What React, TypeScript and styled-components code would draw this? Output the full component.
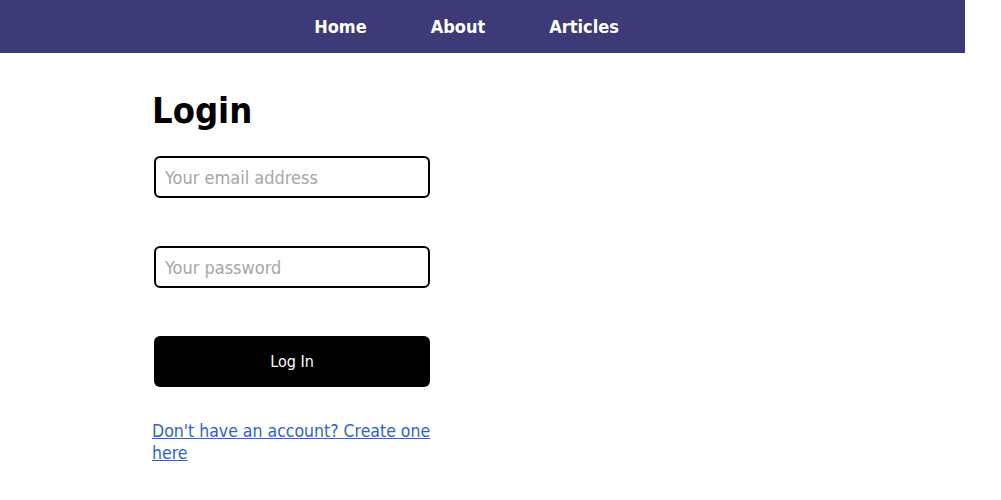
import React from 'react';
import styled, { createGlobalStyle } from 'styled-components';

const GlobalStyle = createGlobalStyle`
  body {
    margin: 0;
    background: #fff;
    font-family: "DejaVu Sans Condensed", "DejaVu Sans", sans-serif;
  }
`;

const NavBar = styled.nav`
  width: 965px;
  height: 53px;
  background-color: #3c3a77;
  display: flex;
  justify-content: center;
  align-items: center;
  padding-right: 32px;
  box-sizing: border-box;
`;

const NavLink = styled.a`
  color: #fff;
  font-weight: bold;
  font-size: 18px;
  text-decoration: none;
  padding: 0 32px;
`;

const Main = styled.main`
  width: 282px;
  margin-left: 152px;
  padding-top: 37px;
`;

const Title = styled.h1`
  margin: 0 0 24px;
  font-size: 36px;
  font-weight: bold;
  line-height: 42px;
  color: #000;
`;

const Form = styled.form`
  display: flex;
  flex-direction: column;
  gap: 48px;
  padding-left: 2px;
  width: 276px;
`;

const Input = styled.input`
  height: 42px;
  box-sizing: border-box;
  border: 2px solid #000;
  border-radius: 6px;
  padding: 0 9px;
  font-family: inherit;
  font-size: 18px;
  outline: none;

  &::placeholder {
    color: #a6a6a6;
  }
`;

const Button = styled.button`
  height: 51px;
  border: none;
  border-radius: 6px;
  background: #000;
  color: #fff;
  font-family: inherit;
  font-size: 16px;
  cursor: pointer;
`;

const SignupLink = styled.a`
  display: block;
  margin-top: 33px;
  color: #2f5fd0;
  font-size: 17.5px;
  line-height: 22px;
  text-decoration: underline;
`;

const App: React.FC = () => {
  return (
    <>
      <GlobalStyle />
      <NavBar>
        <NavLink href="#">Home</NavLink>
        <NavLink href="#">About</NavLink>
        <NavLink href="#">Articles</NavLink>
      </NavBar>
      <Main>
        <Title>Login</Title>
        <Form onSubmit={(e) => e.preventDefault()}>
          <Input type="email" placeholder="Your email address" />
          <Input type="password" placeholder="Your password" />
          <Button type="submit">Log In</Button>
        </Form>
        <SignupLink href="#">Don't have an account? Create one here</SignupLink>
      </Main>
    </>
  );
};

export default App;
